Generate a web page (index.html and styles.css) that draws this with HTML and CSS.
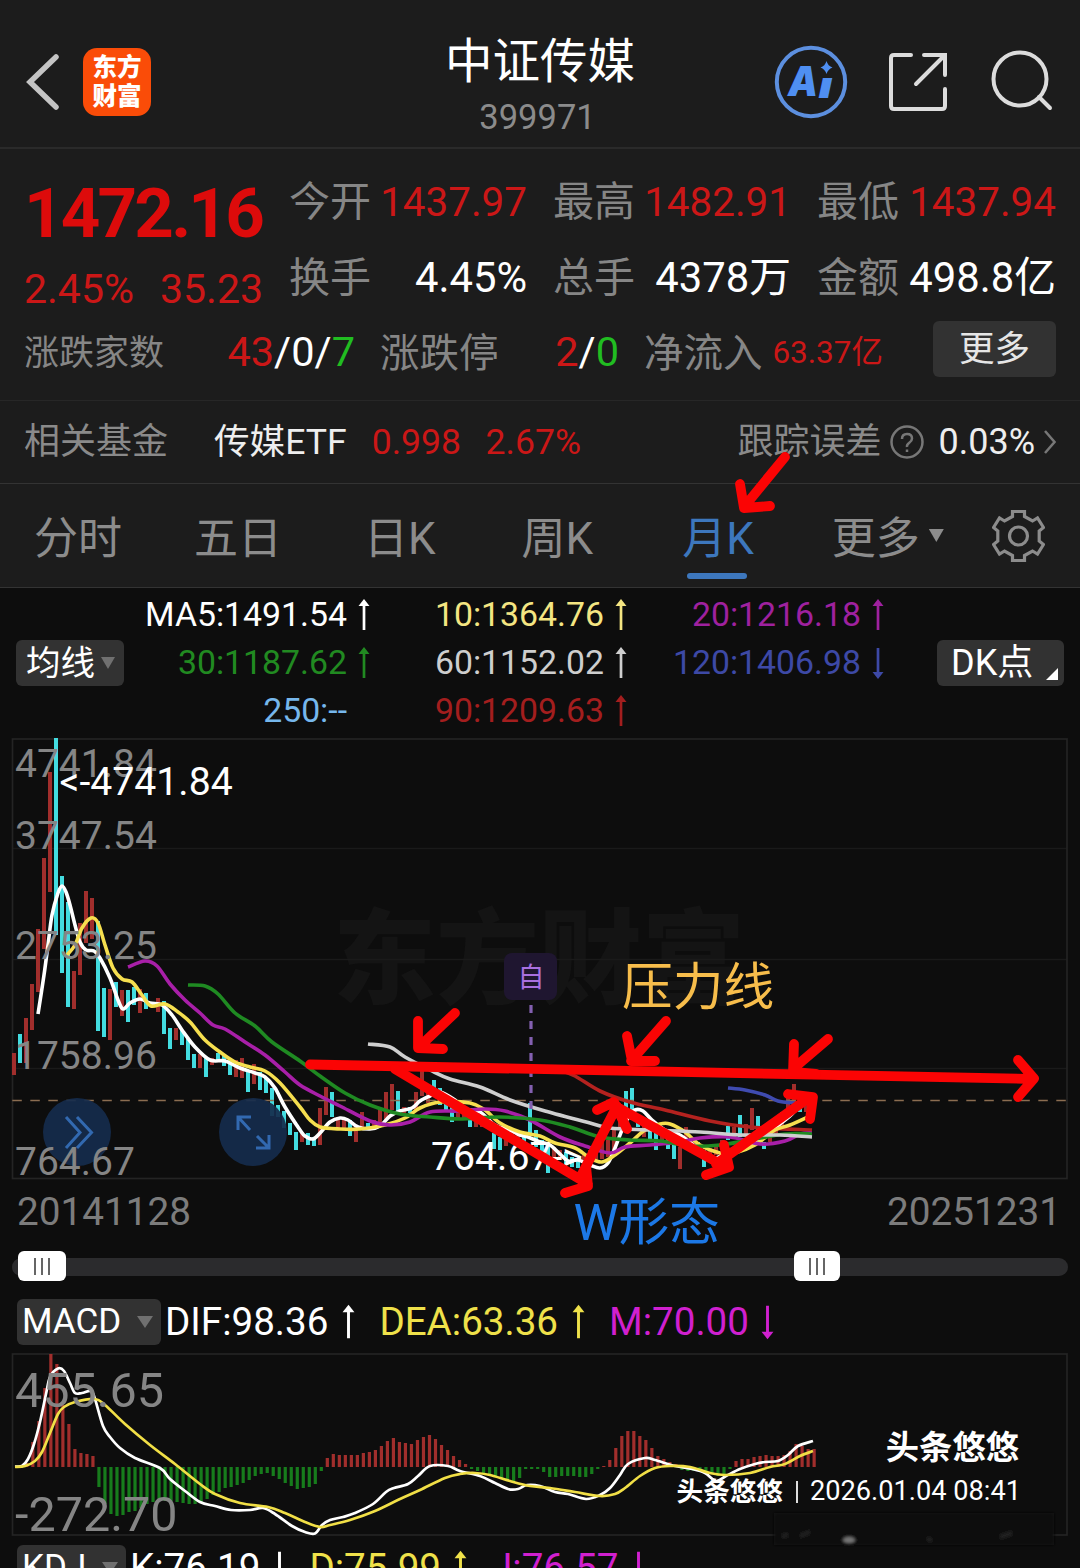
FILE: index.html
```html
<!DOCTYPE html>
<html lang="zh-CN">
<head>
<meta charset="utf-8">
<title>中证传媒 399971</title>
<link rel="stylesheet" href="styles.css">
</head>
<body>
<svg class="defs" aria-hidden="true">
  <symbol id="up" viewBox="0 0 12 32"><path d="M6 31V4" stroke="currentColor" stroke-width="2.700" fill="none"/><path d="M6 0l5.500 7h-11z" fill="currentColor"/></symbol>
  <symbol id="down" viewBox="0 0 12 32"><path d="M6 1v27" stroke="currentColor" stroke-width="2.700" fill="none"/><path d="M6 32l5.500-7h-11z" fill="currentColor"/></symbol>
</svg>
<main class="screen">
  <header class="header">
    <div class="header-left">
      <svg class="back" viewBox="0 0 36 60"><path d="M31 5L5 30L31 55"/></svg>
      <div class="logo"><span>东方</span><span>财富</span></div>
    </div>
    <div class="title"><h1>中证传媒</h1><span>399971</span></div>
    <div class="header-right">
      <svg class="ai" viewBox="0 0 74 74"><circle cx="37" cy="37" r="34.200"/><text x="14" y="51" textLength="30" lengthAdjust="spacingAndGlyphs" class="ai-a">A</text><text x="44.500" y="53" textLength="14" lengthAdjust="spacingAndGlyphs" class="ai-i">ı</text><path d="M52.500 16q1.500 5 6 6.500q-4.500 1.500-6 6.500q-1.500-5-6-6.500q4.500-1.500 6-6.500z"/></svg>
      <svg class="share" viewBox="0 0 60 60"><path d="M23 3H6q-3 0-3 3V54q0 3 3 3H54q3 0 3-3V37M36 3H57V23M56 4L28 32"/></svg>
      <svg class="search" viewBox="0 0 64 64"><circle cx="31" cy="29" r="26.500"/><path d="M50 47L61 58"/></svg>
    </div>
  </header>

  <section class="quote">
    <div class="quote-top">
      <div class="price">
        <strong>1472.16</strong>
        <div class="change"><span>2.45%</span><span>35.23</span></div>
      </div>
      <dl class="stats">
        <div><dt>今开</dt><dd class="red">1437.97</dd></div>
        <div><dt>最高</dt><dd class="red">1482.91</dd></div>
        <div><dt>最低</dt><dd class="red">1437.94</dd></div>
        <div><dt>换手</dt><dd>4.45%</dd></div>
        <div><dt>总手</dt><dd>4378万</dd></div>
        <div><dt>金额</dt><dd>498.8亿</dd></div>
      </dl>
    </div>
    <div class="breadth">
      <div class="pair counts"><span class="label">涨跌家数</span><span><i class="red">43</i>/0/<i class="green">7</i></span></div>
      <div class="pair limits"><span>涨跌停</span><span class="white"><i class="red">2</i>/<i class="green">0</i></span></div>
      <div class="pair inflow"><span>净流入</span><span class="red amount">63.37亿</span></div>
      <button class="more">更多</button>
    </div>
  </section>

  <section class="fund">
    <span class="muted">相关基金</span>
    <span class="fund-name">传媒ETF</span>
    <span class="red fund-price">0.998</span>
    <span class="red fund-pct">2.67%</span>
    <span class="muted tracking">跟踪误差</span>
    <svg class="help" viewBox="0 0 34 34"><circle cx="17" cy="17" r="15.500"/><path d="M12 14q0-5 5-5t5 4.500q0 2.500-2.700 4.300T17 22"/><path d="M17 24.500v2.500"/></svg>
    <span class="error">0.03%</span>
    <svg class="chev" viewBox="0 0 12 24"><path d="M1 1L10.500 12L1 23"/></svg>
  </section>

  <nav class="tabs">
    <a>分时</a><a>五日</a><a>日K</a><a>周K</a><a class="active">月K</a><a>更多<i class="caret"></i></a>
    <svg class="gear" viewBox="992 509 53 54"><path d="M1012.500 511.500h12v5l8 4.500 5-3 6 9.500-4.300 3.500v10l4.300 3.500-6 9.500-5-3-8 4.500v5h-12v-5l-8-4.500-5 3-6-9.500 4.300-3.500v-10l-4.300-3.500 6-9.500 5 3 8-4.500z"/><circle cx="1018.500" cy="536" r="9"/></svg>
  </nav>

  <section class="ma">
    <button class="chip">均线<i class="caret"></i></button>
    <div class="ma-grid">
      <span class="c5">MA5:1491.54<svg><use href="#up"/></svg></span>
      <span class="c10">10:1364.76<svg><use href="#up"/></svg></span>
      <span class="c20">20:1216.18<svg><use href="#up"/></svg></span>
      <span class="c30">30:1187.62<svg><use href="#up"/></svg></span>
      <span class="c60">60:1152.02<svg><use href="#up"/></svg></span>
      <span class="c120">120:1406.98<svg><use href="#down"/></svg></span>
      <span class="c250">250:--<svg></svg></span>
      <span class="c90">90:1209.63<svg><use href="#up"/></svg></span>
    </div>
    <button class="chip dk">DK点<i class="corner"></i></button>
  </section>

  <svg class="kline" viewBox="0 738 1080 442">
    <text class="brand" x="333" y="996" textLength="412">东方财富</text>
    <path class="grid" d="M12 848.500H1067M12 959.500H1067M12 1068.500H1067"/>
    <rect class="frame" x="12.500" y="739" width="1054.500" height="439.500"/>
    <g id="candles"></g>
    <path class="last" d="M12.300 1100.500H1067"/>
    <g id="averages"></g>
    <path class="event-line" d="M531 1005V1112"/>
    <rect class="event" x="504" y="953" width="53" height="47" rx="8"/>
    <text class="event-text" x="517.500" y="987">自</text>
    <g class="axis">
      <text x="15" y="776.500">4741.84</text><text x="15" y="848.500">3747.54</text><text x="15" y="959">2753.25</text><text x="15" y="1069">1758.96</text>
    </g>
    <text class="mark" x="59.500" y="794.500">&lt;-4741.84</text>
    <text class="mark" x="431" y="1170">764.67-&gt;</text>
    <circle class="fab" cx="77" cy="1132" r="34"/>
    <circle class="fab" cx="253" cy="1132" r="34"/>
    <g class="axis"><text x="15" y="1174.500">764.67</text></g>
    <path class="fab-icon" d="M66 1117L80 1132.500L66 1148M77 1117L91.500 1132.500L77 1148"/>
    <path class="fab-icon" d="M238 1130V1117H251M239 1118L250 1130M269 1135V1148H256M268 1147L257 1136"/>
  </svg>

  <div class="dates"><span>20141128</span><span>20251231</span></div>

  <div class="slider"><span class="thumb start"><i></i><i></i><i></i></span><span class="thumb end"><i></i><i></i><i></i></span></div>

  <div class="indicator">
    <button class="chip macd-chip">MACD<i class="caret"></i></button>
    <span class="dif">DIF:98.36<svg><use href="#up"/></svg></span>
    <span class="dea">DEA:63.36<svg><use href="#up"/></svg></span>
    <span class="m">M:70.00<svg><use href="#down"/></svg></span>
  </div>

  <svg class="macd" viewBox="0 1353 1080 184">
    <rect class="frame" x="12.500" y="1354" width="1054.500" height="181"/>
    <g id="bars"></g>
    <g id="macd-lines"></g>
    <g class="axis big"><text x="15" y="1407">455.65</text><text x="15" y="1531">-272.70</text></g>
  </svg>

  <div class="indicator kdj">
    <button class="chip kdj-chip">KDJ<i class="caret"></i></button>
    <span class="k">K:76.19<svg><use href="#down"/></svg></span>
    <span class="d">D:75.99<svg><use href="#up"/></svg></span>
    <span class="j">J:76.57<svg><use href="#down"/></svg></span>
  </div>

  <svg class="notes" viewBox="0 0 1080 1568">
    <defs><filter id="soft"><feGaussianBlur stdDeviation="1.500"/></filter></defs>
    <g class="pen">
      <path d="M785 457L744 507M740 484L744 508L770 506"/>
      <path d="M310 1064.500L1033 1079M1018 1060L1034 1078.500L1018 1097"/>
      <path d="M455 1013L418 1048M418 1021V1048L443 1049"/>
      <path d="M666 1021L631 1061M627 1036L632 1061H655"/>
      <path d="M828 1039L794 1068M794 1044L793 1072L816 1074"/>
      <path d="M395 1069L588 1184M565 1193L588 1186L586 1166M581 1176L617 1106M597 1110L614 1102L627 1129M617 1107L724 1166M706 1175L729 1167L724 1145M716 1164L810 1097M788 1094L813 1097L810 1119"/>
    </g>
    <text class="note gold" x="622" y="1005">压力线</text>
    <text class="note blue" x="573.500" y="1240">W形态</text>
    <g filter="url(#soft)"><path class="smudge" d="M774 1513H1054V1545H774z"/><path class="fleck" d="M782 1537l6-3M800 1536l10-4M927 1539l5 1M1000 1537l12-4"/><ellipse class="glint" cx="849" cy="1540" rx="6" ry="3"/></g>
  </svg>

  <aside class="credit"><b>头条悠悠</b><p><b>头条悠悠</b><i></i><span>2026.01.04 08:41</span></p></aside>
</main>
<script src="chart.js"></script>
</body>
</html>
```
FILE: styles.css
```css
* { box-sizing: border-box; }
body { margin: 0; background: #0d0d0d; color: #fff; font-family: Roboto, "Noto Sans CJK SC", sans-serif; }
h1, dl, dd, p { margin: 0; }
i { font-style: normal; }
button { border: 0; padding: 0; margin: 0; color: inherit; font: inherit; }
svg { display: block; flex: none; }
.defs { position: absolute; width: 0; height: 0; }
.screen { position: relative; width: 1080px; height: 1568px; overflow: hidden; }
.red { color: #cb1717; }
.green { color: #21bd21; }
.muted { color: #8a8a8a; }

.header { height: 149px; background: #1c1c1c; border-bottom: 2px solid #2a2a2a; display: grid; grid-template-columns: 1fr auto 1fr; align-items: center; padding: 16px 27px 0 25px; }
.header-left { display: flex; align-items: center; gap: 22px; }
.back { width: 36px; height: 60px; fill: none; stroke: #c4c4c4; stroke-width: 5.5; stroke-linecap: round; }
.logo { width: 68px; height: 68px; border-radius: 14px; background: #fa4c08; display: flex; flex-direction: column; align-items: center; justify-content: center; font-size: 24.5px; line-height: 29px; font-weight: 900; }
.title { text-align: center; padding: 12px 0 0 2px; }
.title h1 { font-size: 47.5px; line-height: 58px; font-weight: 400; }
.title span { display: block; font-size: 34.5px; line-height: 52px; color: #8b8b8b; padding-right: 5px; }
.header-right { display: flex; justify-content: flex-end; align-items: center; }
.ai { width: 74px; height: 74px; margin-right: 40px; fill: #4f8ff2; }
.ai circle { fill: none; stroke: #5c8fdf; stroke-width: 4; }
.ai text { font-family: Inter, sans-serif; font-weight: 900; font-style: italic; }
.ai-a { font-size: 41px; }
.ai-i { font-size: 37px; }
.share { width: 60px; height: 60px; margin-right: 41px; }
.search { width: 64px; height: 64px; }
.share, .search { fill: none; stroke: #dcdcdc; stroke-width: 4; stroke-linecap: round; }

.quote { height: 252px; background: #1c1c1c; border-bottom: 1px solid #272727; padding: 16px 24px 0; }
.quote-top { display: grid; grid-template-columns: 239px 767px; gap: 26px; height: 150px; }
.price { color: #cb1717; }
.price strong { display: block; font-size: 69px; line-height: 97px; font-weight: 700; letter-spacing: -2.8px; color: #dd0b0b; }
.change { display: flex; justify-content: space-between; font-size: 41px; line-height: 55px; }
.stats { display: grid; grid-template-columns: 238px 238px 239px; gap: 0 26px; font-size: 41px; line-height: 75px; }
.stats div { display: flex; justify-content: space-between; white-space: nowrap; }
.stats dt { color: #868686; }
.stats dd { font-size: 41.8px; line-height: 73px; }
.stats .red { font-size: 40.4px; line-height: 75px; }
.breadth { display: flex; align-items: center; height: 75px; font-size: 41.5px; margin-top: -1px; white-space: nowrap; }
.pair { display: flex; justify-content: space-between; align-items: center; }
.counts { width: 331px; margin-right: 25px; }
.label, .limits > :first-child, .inflow > * { margin-top: -4px; }
.label { font-size: 35px; color: #868686; }
.limits { width: 239px; margin-right: 25px; }
.limits > :first-child, .inflow > :first-child { font-size: 39.5px; color: #868686; }
.inflow { width: 239px; }
.inflow .amount { font-size: 31.5px; margin-top: -6px; }
.more { width: 123px; height: 56px; border-radius: 6px; background: #323232; color: #e6e6e6; font-size: 35.5px; line-height: 56px; margin: -6px 0 0 auto; }

.fund { height: 83px; background: #1c1c1c; border-bottom: 1px solid #333; padding: 0 24px; display: flex; align-items: center; font-size: 36px; line-height: 80px; white-space: nowrap; }
.fund-name { margin-left: 46px; color: #eee; font-size: 35.6px; }
.fund-price { margin-left: 25px; font-size: 35.6px; }
.fund-pct { margin-left: 24.5px; font-size: 35.6px; }
.tracking { margin-left: auto; }
.help { width: 34px; height: 34px; margin: 0 14px 0 9px; }
.error { color: #eee; }
.chev { width: 12px; height: 24px; margin-left: 9px; }
.help, .chev { fill: none; stroke: #777; stroke-width: 2.5; }

.tabs { height: 104px; background: #1c1c1c; border-bottom: 1px solid #333; padding: 0 35px 0 34px; display: flex; align-items: center; font-size: 44px; color: #8c8c8c; }
.tabs a { position: relative; line-height: 110px; height: 103px; white-space: nowrap; }
.tabs a:nth-child(2) { margin-left: 72px; }
.tabs a:nth-child(3) { margin-left: 82px; }
.tabs a:nth-child(4) { margin-left: 86px; }
.tabs a:nth-child(5) { margin-left: 89px; }
.tabs a:nth-child(6) { margin-left: 78px; display: flex; }
.tabs .active { color: #3d77bd; }
.tabs .active::after { content: ""; position: absolute; left: 5px; bottom: 8px; width: 60px; height: 6px; border-radius: 3px; background: #3d77bd; }
.caret { display: inline-block; width: 16px; height: 12px; background: #707070; clip-path: polygon(0 0, 100% 0, 50% 100%); }
.tabs .caret { margin: 45px 0 0 9px; background: #8c8c8c; width: 15px; height: 13px; }
.gear { width: 53px; height: 54px; margin-left: auto; fill: none; stroke: #8c8c8c; stroke-width: 3.2; }

.ma { height: 150px; padding: 0 16px; display: flex; align-items: center; }
.chip { height: 46px; border-radius: 6px; background: #323232; display: flex; align-items: center; justify-content: space-between; font-size: 34.5px; line-height: 46px; white-space: nowrap; flex: none; }
.ma .chip { width: 108px; padding: 0 9px 0 10px; }
.ma .chip .caret { width: 14px; }
.ma-grid { display: grid; grid-template-columns: 246px 257px 257px; grid-auto-rows: 48px; margin: 0; font-size: 33.8px; line-height: 48px; }
.ma-grid span { display: flex; justify-content: flex-end; align-items: center; }
.ma-grid svg { width: 12px; height: 32px; margin-left: 11px; }
.ma .dk { width: 127px; margin: 0 0 0 auto; padding: 0 6px 0 14px; font-size: 36px; }
.corner { width: 12px; height: 12px; background: #fff; clip-path: polygon(100% 0, 100% 100%, 0 100%); align-self: flex-end; margin-bottom: 6px; }
.c10 { color: #f4e582; } .c20 { color: #9f219f; } .c30 { color: #218a21; } .c60 { color: #cecece; }
.c120 { color: #3d49a6; } .c250 { color: #76b7ec; } .c90 { color: #a31e1e; }

.kline { width: 1080px; height: 442px; }
.frame { fill: none; stroke: #242424; stroke-width: 1.7; }
.grid { stroke: #1a1a1a; stroke-width: 1.5; }
.last { stroke: #8b6d51; stroke-width: 1.4; stroke-dasharray: 9.5 8.5; }
.brand { font-size: 103px; font-weight: 900; fill: #141414; }
.axis { font-size: 39px; fill: #858585; }
.big { font-size: 48.5px; }
.mark { font-size: 39.2px; fill: #fff; }
.up { fill: #a12e2c; }
.dn { fill: #43dce0; }
.line { fill: none; stroke-width: 3.6; stroke-linejoin: round; }
.macd .line { stroke-width: 2.7; }
.event { fill: #1f1630; }
.event-text { font-size: 27px; fill: #a970e0; }
.event-line { stroke: #8360b0; stroke-width: 3.2; stroke-dasharray: 8 8; }
.fab { fill: #152c4c; fill-opacity: .93; }
.fab-icon { fill: none; stroke: #3269b0; stroke-width: 3; }

.dates { height: 64px; padding: 0 20px 0 17px; display: flex; justify-content: space-between; color: #7c7c7c; font-size: 38.7px; line-height: 63px; }
.dates span:last-child { margin-right: -1px; }
.slider { height: 46px; margin: 0 12px; position: relative; display: flex; align-items: center; }
.slider::before { content: ""; flex: 1; height: 18px; border-radius: 9px; background: #2b2b2d; }
.thumb { position: absolute; top: 7px; width: 48px; height: 30px; border-radius: 6px; background: #fff; display: flex; align-items: center; justify-content: center; gap: 5px; }
.thumb i { width: 2px; height: 17px; background: #666; }
.start { left: 6px; }
.end { left: 782px; width: 46px; }

.indicator { height: 63px; padding: 9px 17px 0; display: flex; align-items: flex-start; font-size: 38.6px; line-height: 46px; white-space: nowrap; }
.indicator span { display: flex; align-items: center; }
.indicator svg { width: 13px; height: 36px; margin-left: 14px; }
.indicator .m svg { margin-left: 12px; }
.macd-chip { width: 144px; padding: 0 8px 0 5px; }
.macd-chip, .kdj-chip { font-size: 35px; }
.dif { margin-left: 4px; }
.dea { margin-left: 24px; }
.m { margin-left: 24px; }
.dea, .d { color: #efe14a; }
.m, .j { color: #d020cf; }
.macd { width: 1080px; height: 184px; }
.gbar { fill: #177c1c; }
.kdj { height: 50px; padding-top: 8px; }
.kdj svg { margin-left: 13px; }
.kdj-chip { width: 109px; padding: 0 8px 0 5px; }
.k { margin-left: 4px; }
.d { margin-left: 23px; }
.j { margin-left: 24px; }

.notes { position: absolute; left: 0; top: 0; width: 1080px; height: 1568px; pointer-events: none; }
.pen { fill: none; stroke: #fb0404; stroke-width: 9.8; stroke-linecap: round; stroke-linejoin: round; }
.note { font-size: 50.7px; }
.gold { fill: #f7bd4b; }
.blue { fill: #1c78e6; }
.smudge { fill: #0c0c0c; }
.fleck { stroke: #222; stroke-width: 4; }
.glint { fill: #777; }

.credit { position: absolute; right: 59px; top: 1427px; text-align: right; }
.credit > b { display: block; font-size: 33.3px; line-height: 42px; padding-right: 2px; }
.credit p { display: flex; align-items: center; font-size: 27.2px; line-height: 45px; }
.credit p b { font-size: 26.6px; }
.credit i { width: 2px; height: 22px; background: #ddd; margin: 0 12px 0 13px; }
```
FILE: chart.js
```js
const NS = 'http://www.w3.org/2000/svg';
function add(parent, name, attrs) {
  const el = document.createElementNS(NS, name);
  for (const key in attrs) el.setAttribute(key, attrs[key]);
  document.getElementById(parent).appendChild(el);
}

// Monthly candles: r = up, c = down, then high and low in chart units.
const candles = `r1053,1075 c1034,1063 r1018,1063 r984,1030 r929,992 r858,949 r772,892 c738,935 c876,973 c902,1007
r971,1009 r923,975 r891,943 r898,939 c921,1031 c988,1037 r989,1040 c982,1007 r990,1016 c990,1022
c987,1005 r989,1013 c993,1009 c1002,1007 r998,1012 c1001,1034 c1028,1049 r1028,1040 c1030,1045 c1038,1060
c1054,1068 r1054,1068 c1058,1077 r1058,1065 c1053,1062 c1055,1066 c1058,1075 r1060,1077 r1058,1078 c1070,1092
r1064,1084 c1072,1090 c1078,1093 c1088,1116 c1105,1117 c1111,1128 c1123,1135 c1132,1150 r1132,1142 c1133,1145
c1137,1146 r1108,1145 r1087,1115 c1092,1117 r1117,1130 r1120,1129 c1120,1136 r1125,1142 r1112,1130 c1123,1130
r1120,1128 r1109,1123 r1092,1120 r1084,1110 c1091,1113 r1107,1114 c1107,1113 r1092,1111 r1068,1096 r1087,1103
c1080,1095 c1088,1105 c1097,1112 c1107,1122 r1108,1120 r1113,1120 c1112,1127 r1117,1127 r1118,1127 r1117,1127
c1133,1149 c1137,1150 r1135,1146 r1132,1143 r1132,1145 c1132,1143 c1103,1133 c1130,1147 c1140,1157 c1145,1173
r1147,1157 r1150,1160 c1152,1165 c1157,1167 c1158,1168 r1155,1168 r1150,1165 r1145,1160 r1137,1159 r1140,1157
r1128,1150 r1120,1130 c1091,1110 c1088,1120 c1117,1127 r1123,1137 c1120,1139 c1133,1150 r1135,1143 c1137,1149
c1145,1159 r1147,1169 r1127,1143 r1140,1148 c1142,1155 c1150,1167 r1148,1158 r1146,1155 r1140,1150 c1126,1140
r1127,1137 c1115,1137 r1124,1135 r1108,1130 c1116,1135 c1142,1149 r1130,1142 r1124,1135 r1112,1128 r1097,1115
r1084,1110 c1095,1112 r1098,1112 r1094,1108`.split(/\s+/);
candles.forEach((c, i) => {
  const [hi, lo] = c.slice(1).split(',').map(Number);
  add('candles', 'rect', { class: c[0] === 'r' ? 'up' : 'dn', x: 12 + i * 6, y: hi, width: 4, height: lo - hi });
});

// Catmull-Rom smoothing through the given points.
function curve(text) {
  const p = text.trim().split(/\s+/).map(s => s.split(',').map(Number));
  let d = 'M' + p[0];
  for (let i = 0; i < p.length - 1; i++) {
    const a = p[i - 1] || p[i], b = p[i], c = p[i + 1], e = p[i + 2] || c;
    d += `C${b[0] + (c[0] - a[0]) / 6},${b[1] + (c[1] - a[1]) / 6} ${c[0] - (e[0] - b[0]) / 6},${c[1] - (e[1] - b[1]) / 6} ${c}`;
  }
  return d;
}

[
  ['#b4221f', '560,1070 575,1076 600,1091 630,1102 665,1110 710,1121 750,1127 812,1130'],
  ['#3f4bb0', '728,1088 745,1090 765,1095 778,1101 795,1103'],
  ['#fff', '38,1014 44,975 48,945 52,915 58,893 62,886 66,892 70,905 75,925 80,942 86,950 94,951 100,958 110,978 118,1000 123,1009 130,1003 140,999 150,1003 162,1005 172,1015 182,1030 195,1047 210,1060 225,1061 240,1068 255,1073 265,1077 275,1088 285,1107 300,1130 305,1136 313,1139 320,1133 330,1122 340,1118 348,1120 358,1127 370,1129 380,1126 390,1116 400,1111 412,1108 420,1101 430,1096 440,1092 455,1100 465,1109 480,1112 495,1125 510,1130 520,1135 528,1137 540,1142 550,1145 560,1154 568,1161 578,1160 590,1165 600,1168 608,1163 615,1148 622,1130 628,1118 635,1110 643,1111 652,1120 665,1130 680,1135 700,1150 715,1158 730,1150 745,1146 760,1140 775,1128 790,1116 800,1106 812,1100'],
  ['#f6df4f', '67,955 75,945 82,928 91,918 98,923 105,945 113,968 122,979 132,982 142,995 151,1006 165,1004 178,1012 190,1022 205,1040 220,1052 235,1062 250,1067 265,1071 280,1083 300,1107 310,1120 320,1127 340,1129 360,1129 385,1125 405,1118 420,1108 440,1102 470,1103 485,1110 500,1123 520,1132 540,1136 555,1143 575,1148 590,1158 602,1162 615,1155 630,1143 645,1130 660,1124 670,1124 685,1132 700,1145 720,1153 735,1153 755,1145 775,1130 790,1125 812,1115'],
  ['#a81fa8', '128,967 145,961 157,966 170,984 185,1000 200,1013 213,1025 225,1029 245,1042 265,1055 285,1072 300,1085 320,1096 340,1106 370,1121 390,1125 410,1122 430,1112 460,1111 485,1109 505,1111 530,1120 560,1137 585,1146 610,1153 625,1147 650,1145 680,1142 700,1138 730,1137 760,1144 785,1141 800,1134 812,1133'],
  ['#1f8a22', '188,985 205,986 218,994 235,1013 255,1026 272,1042 300,1061 320,1076 345,1093 370,1105 400,1114 430,1117 460,1119 500,1117 540,1120 570,1127 600,1137 630,1140 660,1141 690,1146 720,1145 750,1140 785,1134 812,1134'],
  ['#cfcfcf', '368,1044 390,1047 405,1057 430,1070 450,1079 480,1087 510,1100 545,1111 590,1123 610,1128 650,1130 700,1132 740,1135 780,1135 812,1137']
].forEach(([stroke, pts]) => add('averages', 'path', { class: 'line', stroke, d: curve(pts) }));

const bars = [0, 1, 4, 25, 46, 79, 113, 103, 62, 43, 18, 14, 13, 11,
  -20, -37, -47, -49, -48, -45, -44, -41, -37, -35, -34, -34, -34, -35, -36, -37, -37, -35, -32, -28, -25, -21, -20, -18, -16, -13, -9, -7, -6, -9, -12, -16, -19, -22, -21, -20, -17, -4,
  9, 13, 12, 12, 12, 12, 14, 15, 17, 21, 26, 29, 25, 24, 23, 27, 30, 32, 28, 22, 17, 11, 7, 3,
  -2, -4, -6, -7, -10, -12, -14, -14, -11, -2, -2, -2, -5, -10, -10, -9, -9, -9, -10, -10, -7, -2,
  1, 7, 19, 31, 36, 36, 31, 27, 19, 11, 8, 5, 3, -3, -4, -4, -4, -5, -7, -9, -8, -2,
  6, 8, 8, 10, 11, 12, 11, 11, 12, 16, 23, 21, 18, 18];
bars.forEach((v, i) => add('bars', 'rect', {
  class: v > 0 ? 'up' : 'gbar', x: 13.2 + i * 6.01, y: v > 0 ? 1467 - v : 1467, width: 3.2, height: Math.abs(v)
}));

[
  ['#fff', '15,1466.5 22,1466 28,1459 34,1444 40,1422 46,1394 50,1377 58,1368.5 64,1371 70,1383 75,1393 82,1393 91,1391 95,1399 103,1426 110,1437 120,1448 135,1458 160,1468 170,1479 185,1491 200,1502 215,1506 231,1510 250,1510 263,1508 275,1514 292,1526 305,1532 315,1533.5 322,1525 330,1520 343,1517 355,1513 373,1504 386,1492 394,1488 408,1484 418,1476 430,1466 448,1466 460,1471 480,1476 495,1483 508,1489 518,1489 527,1485 540,1486 555,1492 568,1494 586,1499 600,1495 610,1488 620,1475 628,1464 645,1458 655,1460 675,1466 692,1469 705,1473 716,1481 726,1476 740,1469 755,1464 765,1462 778,1461 788,1455 798,1446 813,1441'],
  ['#f1df46', '15,1467 25,1466 35,1461 42,1452 50,1433 58,1414 64,1407 75,1402 95,1399 105,1405 125,1424 150,1445 175,1464 200,1484 215,1494 240,1503 268,1507 285,1513 305,1522 320,1527 330,1525 350,1520 375,1511 400,1499 420,1490 445,1478 460,1474 475,1473 490,1475 510,1481 530,1486 550,1488 575,1492 600,1496 615,1494 625,1488 640,1476 655,1468 670,1466 690,1467 710,1473 725,1475 750,1473 770,1467 785,1464 800,1456 813,1451']
].forEach(([stroke, pts]) => add('macd-lines', 'path', { class: 'line', stroke, d: curve(pts) }));
```
